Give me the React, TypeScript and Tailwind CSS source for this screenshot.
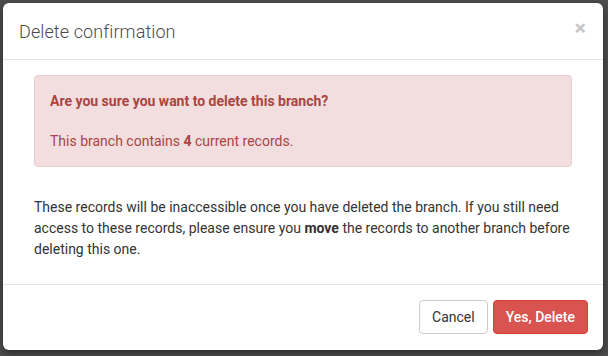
import React from "react";

export default function App() {
  return (
    <div
      className="w-[608px] h-[356px] bg-[#4e4e4e] pl-[3px] pt-[3px] overflow-hidden"
      style={{ fontFamily: "Roboto, 'Liberation Sans', sans-serif" }}
    >
      <div className="w-[600px] h-[347px] bg-white rounded-[6px] flex flex-col shadow-[0_3px_9px_rgba(0,0,0,0.5)]">
        <div className="h-[57px] border-b border-[#e5e5e5] pl-[16px] pr-[17px] flex items-center justify-between">
          <h4 className="text-[18px] font-light text-[#4a4a4a] leading-[25px] tracking-[0.1px]">Delete confirmation</h4>
          <span className="text-[21px] font-bold text-[#c6c6c6] leading-none mt-[-6px]">×</span>
        </div>
        <div className="pt-[15px] px-[31px] pb-[24px] text-[14px] text-[#333]">
          <div className="bg-[#f2dede] border border-[#ebccd1] rounded-[4px] text-[#a94442] px-[15px] py-[15px] leading-[20px]">
            <p className="font-bold">Are you sure you want to delete this branch?</p>
            <p className="mt-[20px]">
              This branch contains <b>4</b> current records.
            </p>
          </div>
          <p className="mt-[30px] leading-[21px] w-[540px]">
            These records will be inaccessible once you have deleted the branch. If you still need access to these
            records, please ensure you <b>move</b> the records to another branch before deleting this one.
          </p>
        </div>
        <div className="border-t border-[#e5e5e5] flex justify-end gap-[5px] px-[15px] pt-[15px]">
          <button className="h-[34px] px-[12px] border border-[#ccc] rounded-[4px] bg-white text-[14px] text-[#333]">
            Cancel
          </button>
          <button className="h-[34px] px-[12px] border border-[#d43f3a] rounded-[4px] bg-[#d9534f] text-[14px] font-medium text-white">
            Yes, Delete
          </button>
        </div>
      </div>
    </div>
  );
}
